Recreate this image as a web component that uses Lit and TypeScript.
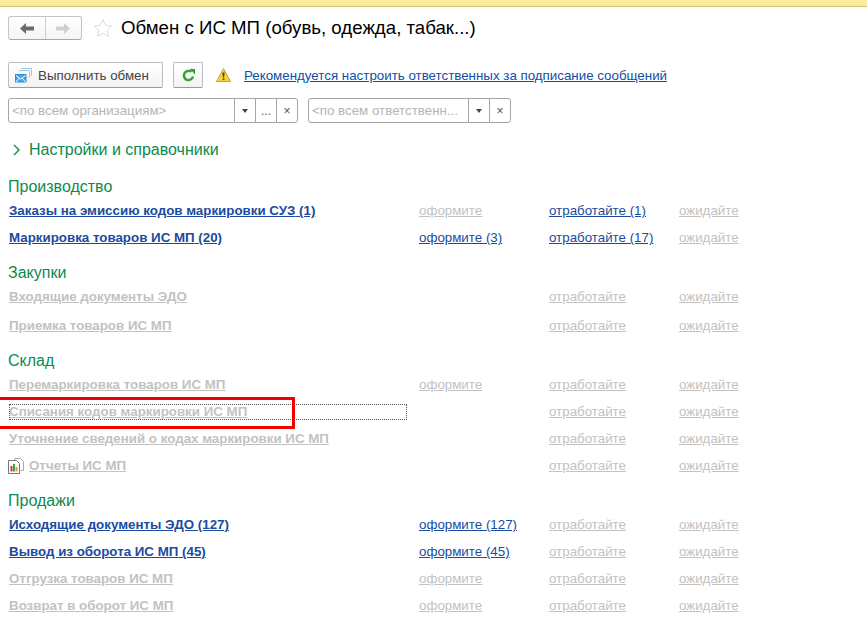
import { LitElement, html, css, nothing } from "lit";
import { customElement } from "lit/decorators.js";

type Row = { t: string; s: string; on?: boolean; a?: string; aOn?: boolean; b?: string; bOn?: boolean; c?: string; h?: number; icon?: boolean; focus?: boolean };

const sections: { title: string; cls: string; rows: Row[] }[] = [
  { title: "Производство", cls: "s1", rows: [
    { t: "Заказы на эмиссию кодов маркировки СУЗ", s: " (1)", on: true, a: "оформите", b: "отработайте (1)", bOn: true },
    { t: "Маркировка товаров ИС МП", s: " (20)", on: true, a: "оформите (3)", aOn: true, b: "отработайте (17)", bOn: true },
  ]},
  { title: "Закупки", cls: "s2", rows: [
    { t: "Входящие документы ЭДО", s: "", b: "отработайте", h: 29 },
    { t: "Приемка товаров ИС МП", s: "", b: "отработайте" },
  ]},
  { title: "Склад", cls: "s3", rows: [
    { t: "Перемаркировка товаров ИС МП", s: "", a: "оформите", b: "отработайте" },
    { t: "Списания кодов маркировки ИС МП", s: "", b: "отработайте", focus: true },
    { t: "Уточнение сведений о кодах маркировки ИС МП", s: "", b: "отработайте" },
    { t: "Отчеты ИС МП", s: "", b: "отработайте", icon: true },
  ]},
  { title: "Продажи", cls: "s4", rows: [
    { t: "Исходящие документы ЭДО", s: " (127)", on: true, a: "оформите (127)", aOn: true, b: "отработайте" },
    { t: "Вывод из оборота ИС МП", s: " (45)", on: true, a: "оформите (45)", aOn: true, b: "отработайте" },
    { t: "Отгрузка товаров ИС МП", s: "", a: "оформите", b: "отработайте" },
    { t: "Возврат в оборот ИС МП", s: "", a: "оформите", b: "отработайте" },
  ]},
];

@customElement("app-root")
export class AppRoot extends LitElement {
  static styles = css`
    :host { display: block; position: relative; width: 867px; height: 639px; overflow: hidden; background: #fff; font-family: "Liberation Sans", Arial, sans-serif; font-size: 13.33px; color: #333; }
    .strip { height: 6px; background: #fcec9f; border-bottom: 1px solid #d6c26e; }
    .head { display: flex; align-items: center; padding: 9px 0 0 8px; height: 24px; }
    .nav { display: flex; width: 74px; height: 24px; border: 1px solid #c4c4c4; border-bottom-color: #a8a8a8; border-radius: 3px; box-sizing: border-box; background: linear-gradient(#fff, #f4f4f4); }
    .nav div { flex: 1; display: flex; align-items: center; justify-content: center; }
    .nav div + div { border-left: 1px solid #d0d0d0; }
    .star { margin: 0 0 0 11px; display: block; }
    h1 { margin: 0 0 0 8px; font-size: 18.67px; font-weight: 400; color: #000; line-height: 24px; }
    .tools { display: flex; align-items: center; margin: 22px 0 0 8px; height: 26px; }
    .btn { height: 26px; box-sizing: border-box; border: 1px solid #bdbdbd; border-bottom-color: #999; border-radius: 2px; background: linear-gradient(#fff, #f3f3f3); display: flex; align-items: center; color: #444; }
    .run { width: 155px; gap: 6px; padding-left: 6px; }
    .refresh { width: 30px; margin-left: 10px; justify-content: center; }
    .warn { margin-left: 13px; display: block; }
    .rec { margin-left: 13px; color: #0f4fa8; text-decoration: underline; }
    .filters { display: flex; margin: 10px 0 0 8px; gap: 10px; }
    .combo { display: flex; height: 25px; box-sizing: border-box; border: 1px solid #a5a5a5; border-radius: 3px; color: #b5b5b5; }
    .combo .txt { padding-left: 3px; line-height: 23px; white-space: nowrap; overflow: hidden; box-sizing: border-box; }
    .combo .cell { width: 21px; box-sizing: border-box; border-left: 1px solid #a5a5a5; display: flex; align-items: center; justify-content: center; color: #555; font-size: 12px; }
    .tri { width: 0; height: 0; border: 3px solid transparent; border-top: 4px solid #444; border-bottom: 0; }
    .c1 .txt { width: 225px; } .c2 .txt { width: 159px; }
    .settings { display: flex; align-items: center; margin: 15px 0 0 13px; height: 24px; color: #0d8a4f; font-size: 16px; }
    .settings svg { margin-right: 8px; }
    .sec { font-size: 16px; color: #0d8a4f; line-height: 22px; padding-left: 8px; height: 20px; }
    .s1 { margin-top: 14px; } .s2 { margin-top: 11px; } .s3 { margin-top: 11px; } .s4 { margin-top: 11px; }
    .s1 .sec, .s3 .sec, .s4 .sec { margin-bottom: 1px; }
    .row { display: grid; grid-template-columns: 410px 130px 130px 1fr; height: 27px; align-items: center; padding-left: 9px; }
    .tall { height: 29px; margin-bottom: 1px; }
    .link { color: #c2c2c2; text-decoration: underline; white-space: nowrap; }
    .on { color: #1a4ba0; }
    .main { font-weight: 700; display: flex; align-items: center; height: 16px; }
    .focus { width: 398px; box-sizing: border-box; outline: 1px dotted #555; outline-offset: -1px; }
    .main svg { margin-right: 5px; margin-left: -1px; }
    .red { position: absolute; left: -4px; top: 397px; width: 299px; height: 32px; box-sizing: border-box; border: 3px solid #f00000; pointer-events: none; }
  `;

  private row(r: Row) {
    return html`<div class="row ${r.h ? "tall" : ""}">
      <div class="main ${r.focus ? "focus" : ""}">
        ${r.icon ? html`<svg width="16" height="16" viewBox="0 0 16 16"><path d="M6.5 2.5V.5h6l3 3v9h-3" fill="#fff" stroke="#a4abb3"/><path d="M.5 2.5h8l3 3v10h-11z" fill="#fff" stroke="#6f7883"/><rect x="2.5" y="8" width="2" height="5.5" fill="#d9362b"/><rect x="5" y="6" width="2" height="7.5" fill="#3ea64a"/><rect x="7.5" y="9" width="2" height="4.5" fill="#e0a020"/></svg>` : nothing}
        <span class="link ${r.on ? "on" : ""}">${r.t}${r.s}</span>
      </div>
      <div>${r.a ? html`<span class="link ${r.aOn ? "on" : ""}">${r.a}</span>` : nothing}</div>
      <div><span class="link ${r.bOn ? "on" : ""}">${r.b}</span></div>
      <div><span class="link">ожидайте</span></div>
    </div>`;
  }

  render() {
    return html`
      <div class="strip"></div>
      <div class="head">
        <div class="nav">
          <div><svg width="14" height="11" viewBox="0 0 14 11"><path d="M0 5.5 6 0v3.5h8v4H6V11z" fill="#6b6b6b"/></svg></div>
          <div><svg width="14" height="11" viewBox="0 0 14 11"><path d="M14 5.5 8 0v3.5H0v4h8V11z" fill="#cfcfcf"/></svg></div>
        </div>
        <svg class="star" width="20" height="20" viewBox="0 0 20 20"><path d="M10 1.5 12.6 7.3 19 8 14.2 12.2 15.6 18.5 10 15.3 4.4 18.5 5.8 12.2 1 8 7.4 7.3z" fill="#fff" stroke="#dcdcdc"/></svg>
        <h1>Обмен с ИС МП (обувь, одежда, табак...)</h1>
      </div>
      <div class="tools">
        <div class="btn run">
          <svg width="17" height="15" viewBox="0 0 17 15"><path d="M6.500 1.500V.5h10v7h-1M4.500 3.500v-1h10v7h-1" fill="none" stroke="#9ccdee"/><rect x="0.5" y="6.500" width="10.500" height="7.500" fill="#4aa3e0" stroke="#2f8fd6"/><path d="M1 7.500l4.750 3.500 4.750-3.500M1 14l3.500-4M10.500 14l-3.500-4" fill="none" stroke="#fff"/></svg>
          <span>Выполнить обмен</span>
        </div>
        <div class="btn refresh">
          <svg width="15" height="15" viewBox="0 0 15 15"><path d="M12 8.500A4.600 4.600 0 1 1 10.400 3.900" fill="none" stroke="#35a02f" stroke-width="2.400"/><path d="M8.500 0.800 14 1v5.500z" fill="#35a02f"/></svg>
        </div>
        <svg class="warn" width="15" height="14" viewBox="0 0 15 14"><path d="M7.500 0.600 14.500 13.500H.5z" fill="#fbd23c" stroke="#c9a227" stroke-linejoin="round"/><path d="M6.300 4.500h2.400l-.6 5H6.900z" fill="#5a4a10"/><rect x="6.700" y="10.400" width="1.700" height="1.700" fill="#5a4a10"/></svg>
        <span class="rec">Рекомендуется настроить ответственных за подписание сообщений</span>
      </div>
      <div class="filters">
        <div class="combo c1"><div class="txt">&lt;по всем организациям&gt;</div><div class="cell"><div class="tri"></div></div><div class="cell">...</div><div class="cell">×</div></div>
        <div class="combo c2"><div class="txt">&lt;по всем ответственн...</div><div class="cell"><div class="tri"></div></div><div class="cell">×</div></div>
      </div>
      <div class="settings"><svg width="8" height="12" viewBox="0 0 8 12"><path d="M1 1l5 5-5 5" fill="none" stroke="#0d8a4f" stroke-width="1.400"/></svg>Настройки и справочники</div>
      ${sections.map(s => html`<div class="${s.cls}"><div class="sec">${s.title}</div>${s.rows.map(r => this.row(r))}</div>`)}
      <div class="red"></div>
    `;
  }
}
